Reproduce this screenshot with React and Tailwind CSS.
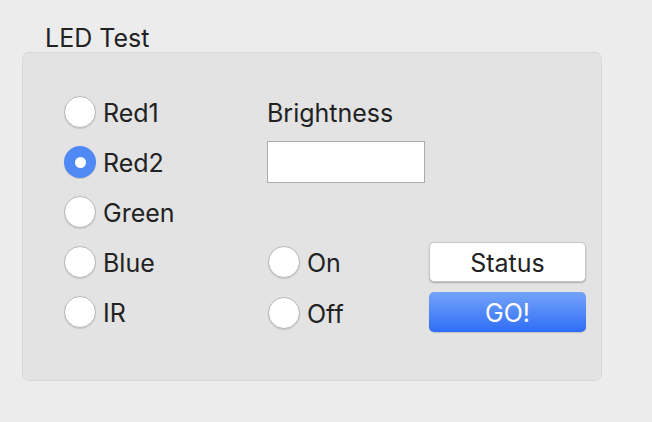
function Radio({ label, checked }) {
  return (
    <div className="flex items-center gap-[7px]">
      {checked ? (
        <div className="w-[32px] h-[32px] shrink-0 rounded-full bg-[#4f89f6] flex items-center justify-center shadow-[0_1px_1px_rgba(0,0,0,0.15)]">
          <div className="w-[11px] h-[11px] rounded-full bg-white" />
        </div>
      ) : (
        <div className="w-[32px] h-[32px] shrink-0 rounded-full bg-white border border-[#b8b8b8] shadow-[0_1px_1px_rgba(0,0,0,0.12)]" />
      )}
      <span className="pt-[2px]">{label}</span>
    </div>
  );
}

export default function App() {
  return (
    <div
      className="w-[652px] h-[422px] bg-[#ececec] text-[#222] text-[25px] leading-[26px]"
      style={{ fontFamily: 'Inter, "Liberation Sans", Arial, sans-serif' }}
    >
      <div className="pl-[45px] pt-[25px] h-[52px]">LED Test</div>
      <div className="ml-[22px] w-[580px] h-[329px] bg-[#e3e3e3] border border-[#d8d8d8] rounded-[7px] pl-[41px] pt-[34px]">
        <div className="grid grid-cols-[203px_162px_157px] grid-rows-[repeat(5,50px)] items-center">
          <Radio label="Red1" />
          <div className="pt-[2px]">Brightness</div>
          <div />

          <Radio label="Red2" checked />
          <div className="w-[158px] h-[42px] bg-white border-[1.5px] border-[#ababab]" />
          <div />

          <Radio label="Green" />
          <div />
          <div />

          <Radio label="Blue" />
          <div className="pl-[1px]">
            <Radio label="On" />
          </div>
          <button className="w-[157px] h-[40px] pt-[1px] bg-white border border-[#c6c6c6] rounded-[5px] shadow-[0_1px_1.5px_rgba(0,0,0,0.25)] text-[25px] text-[#222]">
            Status
          </button>

          <Radio label="IR" />
          <div className="pl-[1px] pt-[2px]">
            <Radio label="Off" />
          </div>
          <button className="w-[157px] h-[40px] pt-[1px] rounded-[5px] bg-gradient-to-b from-[#74a3f8] to-[#2f6cf6] text-white text-[25px] shadow-[0_1px_1px_rgba(0,0,0,0.15)]">
            GO!
          </button>
        </div>
      </div>
    </div>
  );
}
